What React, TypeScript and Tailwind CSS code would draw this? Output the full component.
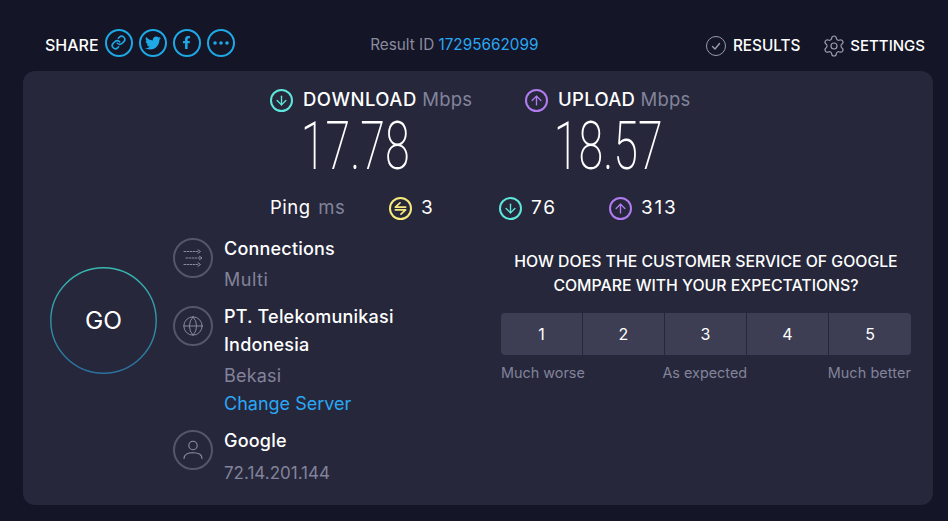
import { FaTwitter, FaFacebookF } from "react-icons/fa";
import { Link, Settings, Globe, ArrowDown, ArrowUp } from "lucide-react";

const font = { fontFamily: "Inter, 'Noto Sans', sans-serif" };

function Ring({ color, children }: { color: string; children: React.ReactNode }) {
  return (
    <span className={`flex items-center justify-center rounded-full border-2 shrink-0 w-[23px] h-[23px] ${color}`}>{children}</span>
  );
}

function DownIcon() {
  return <Ring color="border-[#5fe6da] text-[#5fe6da]"><ArrowDown size={15} strokeWidth={2.2} /></Ring>;
}
function UpIcon() {
  return <Ring color="border-[#b07cf0] text-[#b07cf0]"><ArrowUp size={15} strokeWidth={2.2} /></Ring>;
}

function PingIcon() {
  return (
    <Ring color="border-[#f6ea7c] text-[#f6ea7c]">
      <svg width="15" height="15" viewBox="0 0 16 16" fill="none" stroke="currentColor" strokeWidth="1.8" strokeLinecap="round" strokeLinejoin="round">
        <path d="M7.5 2 L2.5 6.5 H13.5" />
        <path d="M2.5 9.5 H13.5 L8.5 14" />
      </svg>
    </Ring>
  );
}

function Share({ children }: { children: React.ReactNode }) {
  return (
    <span className="flex items-center justify-center w-[28px] h-[28px] rounded-full border-2 border-[#1fa8e6] text-[#1fa8e6]">{children}</span>
  );
}

function Circle({ children }: { children: React.ReactNode }) {
  return (
    <span className="flex items-center justify-center w-[40px] h-[40px] mt-[3px] rounded-full border-2 border-[#55566a] text-[#8f90a3] shrink-0">{children}</span>
  );
}

function ConnIcon() {
  return (
    <svg width="20" height="18" viewBox="0 0 20 18" fill="none" stroke="currentColor" strokeWidth="1" strokeLinecap="round" strokeLinejoin="round">
      <path d="M1 2.5h15" strokeDasharray="1.5 1.5" />
      <path d="M15 0.8l2.5 1.7-2.5 1.7" />
      <path d="M3 9h15" strokeDasharray="1.5 1.5" />
      <path d="M16.5 7.3l2.5 1.7-2.5 1.7" />
      <path d="M1 15.5h15" strokeDasharray="1.5 1.5" />
      <path d="M15 13.8l2.5 1.7-2.5 1.7" />
    </svg>
  );
}

function UserIcon() {
  return (
    <svg width="20" height="22" viewBox="0 0 20 22" fill="none" stroke="currentColor" strokeWidth="1.1" strokeLinecap="round">
      <circle cx="10" cy="6.5" r="4.2" />
      <path d="M1 19.5c0-4 3.5-5.8 9-5.8s9 1.8 9 5.8" />
    </svg>
  );
}

function Speed({ value, width }: { value: string; width: string }) {
  return (
    <div className={`h-[64px] flex justify-center items-center ${width}`}>
      <span className="text-[67px] font-extralight scale-x-[0.67] leading-[48px]" style={{ fontFamily: "Roboto, sans-serif" }}>{value}</span>
    </div>
  );
}

export default function App() {
  return (
    <div className="w-[948px] h-[521px] bg-[#141526] overflow-hidden text-white flex flex-col" style={font}>
      <header className="h-[71px] shrink-0 flex items-center justify-between pl-[45px] pr-[23px] pt-[18px]">
        <div className="flex items-center">
          <span className="text-[16px] font-medium mr-[6px]">SHARE</span>
          <div className="flex items-center gap-[6px] mb-[4px]">
            <Share><Link size={15} strokeWidth={2.6} /></Share>
            <Share><FaTwitter size={16} /></Share>
            <Share><FaFacebookF size={13} /></Share>
            <Share>
              <svg width="16" height="4" viewBox="0 0 16 4" fill="currentColor">
                <circle cx="2" cy="2" r="1.8" /><circle cx="8" cy="2" r="1.8" /><circle cx="14" cy="2" r="1.8" />
              </svg>
            </Share>
          </div>
        </div>
        <div className="text-[15.3px] text-[#8a8b9e] mr-[32px] mt-[1px]">
          Result ID <span className="text-[#2aa7f5]">17295662099</span>
        </div>
        <div className="flex items-center mt-[3px]">
          <span className="flex items-center justify-center w-[20px] h-[20px] rounded-full border-[1.5px] border-[#9a9bac] text-[#9a9bac] mr-[7px]">
            <svg width="12" height="12" viewBox="0 0 12 12" fill="none" stroke="currentColor" strokeWidth="1.4" strokeLinecap="round" strokeLinejoin="round"><path d="M2.5 6.5l2.5 2.5 4.5-5.5" /></svg>
          </span>
          <span className="text-[15.3px] font-medium mr-[22px]">RESULTS</span>
          <Settings size={24} strokeWidth={1.2} className="text-[#9a9bac] mr-[4px]" />
          <span className="text-[15px] font-medium">SETTINGS</span>
        </div>
      </header>

      <main className="w-[910px] h-[434px] ml-[23px] bg-[#26273b] rounded-[12px] flex flex-col">
        <div className="pl-[247px] pt-[17px] flex">
          <div className="w-[255px]">
            <div className="flex items-center gap-[10px] h-[24px]">
              <DownIcon />
              <span className="text-[18.5px] font-medium tracking-[0.5px] whitespace-nowrap">DOWNLOAD <span className="text-[#82839a] font-normal tracking-[0.2px]">Mbps</span></span>
            </div>
            <div className="pt-[2px] pb-[1px]"><Speed value="17.78" width="w-[170px]" /></div>
          </div>
          <div className="w-[180px]">
            <div className="flex items-center gap-[10px] h-[24px]">
              <UpIcon />
              <span className="text-[18.5px] font-medium tracking-[0.3px] whitespace-nowrap">UPLOAD <span className="text-[#82839a] font-normal tracking-[0.2px]">Mbps</span></span>
            </div>
            <div className="pt-[2px] pb-[1px]"><Speed value="18.57" width="w-[166px]" /></div>
          </div>
        </div>

        <div className="pl-[247px] mt-[17px] flex items-center h-[24px] text-[18.5px] tracking-[0.5px]">
          <span className="w-[119px]">Ping <span className="text-[#82839a] ml-[2px]">ms</span></span>
          <span className="w-[110px] flex items-center gap-[9px] text-[19px] tracking-[1.8px]"><PingIcon /> 3</span>
          <span className="w-[110px] flex items-center gap-[9px] text-[19px] tracking-[1.8px]"><DownIcon /> 76</span>
          <span className="flex items-center gap-[9px] text-[19px] tracking-[1.8px]"><UpIcon /> 313</span>
        </div>

        <div className="flex mt-[15px]">
          <div className="w-[150px] pl-[27px] pt-[32px] shrink-0">
            <div className="relative w-[107px] h-[107px] flex items-center justify-center">
              <svg className="absolute inset-0" width="107" height="107" viewBox="0 0 107 107" fill="none">
                <defs>
                  <linearGradient id="go" x1="0" y1="0" x2="0" y2="1">
                    <stop offset="0" stopColor="#38b8b0" />
                    <stop offset="1" stopColor="#2a6f9e" />
                  </linearGradient>
                </defs>
                <circle cx="53.5" cy="53.5" r="52.7" stroke="url(#go)" strokeWidth="1.4" />
              </svg>
              <span className="text-[24.5px] font-normal">GO</span>
            </div>
          </div>

          <div className="w-[328px] text-[18px] leading-[28px] tracking-[0.2px]">
            <div className="flex gap-[11px] h-[68px]">
              <Circle><ConnIcon /></Circle>
              <div>
                <div className="font-medium">Connections</div>
                <div className="text-[#82839a] mt-[3px] tracking-[0.5px]">Multi</div>
              </div>
            </div>
            <div className="flex gap-[11px] h-[124px]">
              <Circle><Globe size={22} strokeWidth={1} /></Circle>
              <div className="w-[200px]">
                <div className="font-medium">PT. Telekomunikasi Indonesia</div>
                <div className="text-[#82839a] mt-[3px]">Bekasi</div>
                <div className="text-[#2aa7f5] tracking-normal">Change Server</div>
              </div>
            </div>
            <div className="flex gap-[11px]">
              <Circle><UserIcon /></Circle>
              <div>
                <div className="font-medium">Google</div>
                <div className="text-[#82839a] mt-[4px] text-[17px] tracking-normal">72.14.201.144</div>
              </div>
            </div>
          </div>

          <div className="w-[410px] pt-[15px]">
            <div className="text-center text-[15.8px] font-medium leading-[24px] uppercase">
              <span className="block">How does the customer service of Google</span>
              <span className="block">compare with your expectations?</span>
            </div>
            <div className="mt-[15px] h-[42px] grid grid-cols-5 rounded-[4px] overflow-hidden bg-[#3d3e53] text-[16px] divide-x divide-[#26273b]">
              {[1, 2, 3, 4, 5].map((n) => (
                <div key={n} className="flex items-center justify-center">{n}</div>
              ))}
            </div>
            <div className="mt-[7px] flex justify-between text-[14.4px] text-[#82839a]">
              <span>Much worse</span>
              <span className="mr-[3px]">As expected</span>
              <span className="tracking-[0.1px]">Much better</span>
            </div>
          </div>
        </div>
      </main>
    </div>
  );
}
